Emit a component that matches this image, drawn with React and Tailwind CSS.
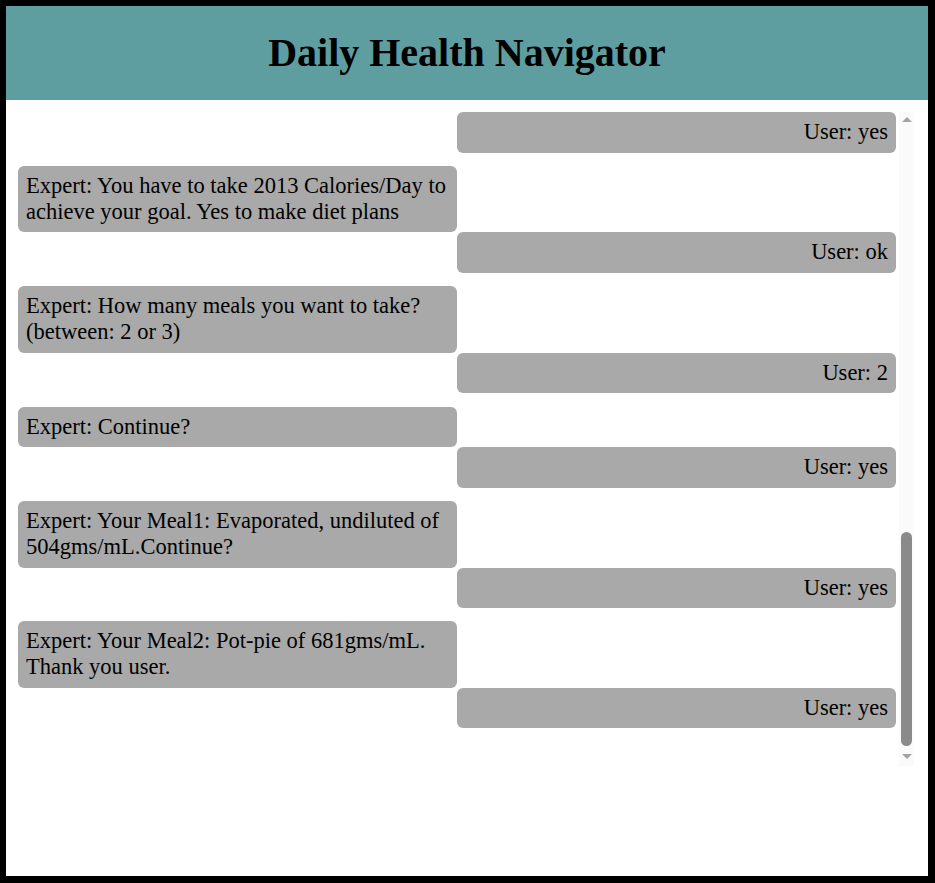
import React from "react";

const messages = [
  { from: "user", text: "User: yes" },
  { from: "expert", text: "Expert: You have to take 2013 Calories/Day to achieve your goal. Yes to make diet plans" },
  { from: "user", text: "User: ok" },
  { from: "expert", text: "Expert: How many meals you want to take? (between: 2 or 3)" },
  { from: "user", text: "User: 2" },
  { from: "expert", text: "Expert: Continue?" },
  { from: "user", text: "User: yes" },
  { from: "expert", text: "Expert: Your Meal1: Evaporated, undiluted of 504gms/mL.Continue?" },
  { from: "user", text: "User: yes" },
  { from: "expert", text: "Expert: Your Meal2: Pot-pie of 681gms/mL. Thank you user." },
  { from: "user", text: "User: yes" },
];

function Bubble({ msg }) {
  if (msg.from === "expert") {
    return (
      <div className="flex justify-start mt-[13.4px]">
        <div className="w-1/2 bg-[#a9a9a9] rounded-md px-2 pt-[7px] pb-[7.5px] text-left">{msg.text}</div>
      </div>
    );
  }
  return (
    <div className="flex justify-end">
      <div className="w-1/2 bg-[#a9a9a9] rounded-md px-2 pt-[7px] pb-[7.5px] text-right">{msg.text}</div>
    </div>
  );
}

// fake scrollbar (scrolled to the bottom)
function ScrollBar() {
  return (
    <div className="w-[15px] ml-[3px] bg-[#fafafa] flex flex-col items-center">
      <div className="h-[15px] flex items-center justify-center">
        <svg width="10" height="5" viewBox="0 0 10 5">
          <polygon points="0,5 5,0 10,5" fill="#a3a3a3" />
        </svg>
      </div>
      <div className="flex-1 w-full flex flex-col justify-end px-[2px]">
        <div className="h-[214px] w-full rounded-full bg-[#8a8a8a]" />
      </div>
      <div className="h-[20px] flex items-center justify-center">
        <svg width="10" height="5" viewBox="0 0 10 5">
          <polygon points="0,0 10,0 5,5" fill="#a3a3a3" />
        </svg>
      </div>
    </div>
  );
}

export default function App() {
  return (
    <div
      className="h-[883px] w-[935px] border-[6px] border-r-[7px] border-b-[7px] border-black bg-white text-black"
      style={{ fontFamily: '"Liberation Serif", "Times New Roman", serif' }}
    >
      <header className="h-[94px] bg-[#5f9ea0] flex items-center justify-center">
        <h1 className="text-[40px] font-bold">Daily Health Navigator</h1>
      </header>
      <div className="pt-[12px] pl-[12px] pr-[14px]">
        <div className="flex h-[654px]">
          <div className="flex-1 overflow-hidden text-[22.5px] leading-[26px]">
            {messages.map((m, i) => (
              <Bubble key={i} msg={m} />
            ))}
          </div>
          <ScrollBar />
        </div>
      </div>
    </div>
  );
}
